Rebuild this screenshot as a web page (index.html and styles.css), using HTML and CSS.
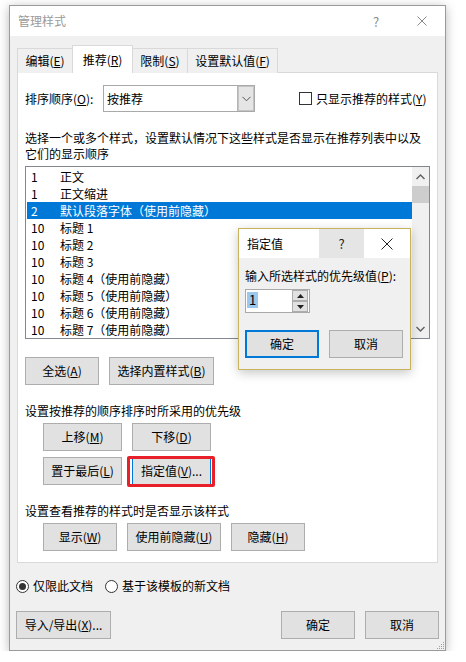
FILE: index.html
```html
<!DOCTYPE html>
<html lang="zh-CN">
<head>
<meta charset="utf-8">
<title>管理样式</title>
<link rel="stylesheet" href="styles.css">
</head>
<body>
<div class="window">
  <div class="titlebar">
    <span class="title">管理样式</span>
    <span class="tb-btn tb-help">?</span>
    <span class="tb-btn"><svg width="10" height="10" viewBox="0 0 10 10"><path d="M0.5 0.5 L9.5 9.5 M9.5 0.5 L0.5 9.5" stroke="#8a8a8a" stroke-width="1" fill="none"/></svg></span>
  </div>

  <div class="tabs">
    <div class="tab tab-1">编辑(<u>E</u>)</div>
    <div class="tab tab-active">推荐(<u>R</u>)</div>
    <div class="tab tab-3">限制(<u>S</u>)</div>
    <div class="tab tab-4">设置默认值(<u>F</u>)</div>
  </div>

  <div class="panel">
    <div class="sort-row">
      <span class="sort-label">排序顺序(<u>O</u>):</span>
      <div class="combo">
        <span class="combo-text">按推荐</span>
        <span class="combo-btn"><svg width="9" height="6" viewBox="0 0 9 6"><path d="M0.5 0.8 L4.5 4.8 L8.5 0.8" stroke="#555" stroke-width="1" fill="none"/></svg></span>
      </div>
      <span class="check"><span class="check-box"></span>只显示推荐的样式(<u>Y</u>)</span>
    </div>

    <p class="text desc">选择一个或多个样式，设置默认情况下这些样式是否显示在推荐列表中以及<br>它们的显示顺序</p>

    <div class="list">
      <div class="rows">
        <div class="row"><span class="num">1</span><span>正文</span></div>
        <div class="row"><span class="num">1</span><span>正文缩进</span></div>
        <div class="row row-sel"><span class="num">2</span><span>默认段落字体（使用前隐藏）</span></div>
        <div class="row"><span class="num">10</span><span>标题 1</span></div>
        <div class="row"><span class="num">10</span><span>标题 2</span></div>
        <div class="row"><span class="num">10</span><span>标题 3</span></div>
        <div class="row"><span class="num">10</span><span>标题 4（使用前隐藏）</span></div>
        <div class="row"><span class="num">10</span><span>标题 5（使用前隐藏）</span></div>
        <div class="row"><span class="num">10</span><span>标题 6（使用前隐藏）</span></div>
        <div class="row"><span class="num">10</span><span>标题 7（使用前隐藏）</span></div>
      </div>
      <div class="scrollbar">
        <span class="sb-btn"><svg width="9" height="6" viewBox="0 0 9 6"><path d="M0.5 5 L4.5 1 L8.5 5" stroke="#606060" stroke-width="1.4" fill="none"/></svg></span>
        <span class="sb-thumb"></span>
        <span class="sb-track"></span>
        <span class="sb-btn"><svg width="9" height="6" viewBox="0 0 9 6"><path d="M0.5 1 L4.5 5 L8.5 1" stroke="#606060" stroke-width="1.4" fill="none"/></svg></span>
      </div>
    </div>

    <div class="btn-row first-row">
      <span class="btn w74">全选(<u>A</u>)</span>
      <span class="btn w105">选择内置样式(<u>B</u>)</span>
    </div>

    <p class="text section">设置按推荐的顺序排序时所采用的优先级</p>
    <div class="btn-grid">
      <span class="btn w79">上移(<u>M</u>)</span>
      <span class="btn w79">下移(<u>D</u>)</span>
      <span class="btn w79">置于最后(<u>L</u>)</span>
      <span class="btn w79 btn-focus marked">指定值(<u>V</u>)...</span>
    </div>

    <p class="text section">设置查看推荐的样式时是否显示该样式</p>
    <div class="btn-row indent">
      <span class="btn w74">显示(<u>W</u>)</span>
      <span class="btn w94">使用前隐藏(<u>U</u>)</span>
      <span class="btn w74">隐藏(<u>H</u>)</span>
    </div>
  </div>

  <div class="radios">
    <span class="radio radio-on"></span><span class="radio-label">仅限此文档</span>
    <span class="radio"></span><span class="radio-label">基于该模板的新文档</span>
  </div>

  <div class="footer">
    <span class="btn w95">导入/导出(<u>X</u>)...</span>
    <span class="spacer"></span>
    <span class="btn w74">确定</span>
    <span class="btn w74">取消</span>
  </div>

  <div class="popup">
    <div class="popup-title">
      <span class="popup-name">指定值</span>
      <span class="popup-tb popup-help">?</span>
      <span class="popup-tb"><svg width="12" height="12" viewBox="0 0 12 12"><path d="M0.5 0.5 L11.5 11.5 M11.5 0.5 L0.5 11.5" stroke="#222" stroke-width="1" fill="none"/></svg></span>
    </div>
    <div class="popup-body">
      <p class="text popup-label">输入所选样式的优先级值(<u>P</u>):</p>
      <div class="spin">
        <span class="spin-field"><span class="spin-sel">1</span></span>
        <span class="spin-btns">
          <span class="spin-btn"><svg width="7" height="4" viewBox="0 0 7 4"><path d="M0 4 L3.5 0 L7 4 Z" fill="#222"/></svg></span>
          <span class="spin-btn"><svg width="7" height="4" viewBox="0 0 7 4"><path d="M0 0 L3.5 4 L7 0 Z" fill="#222"/></svg></span>
        </span>
      </div>
      <div class="popup-btns">
        <span class="btn w74 btn-default">确定</span>
        <span class="btn w74">取消</span>
      </div>
    </div>
  </div>

  <svg class="grip" width="9" height="9" viewBox="0 0 9 9">
    <rect x="7" y="1" width="1" height="1" fill="#a0a0a0"/>
    <rect x="5" y="3" width="1" height="1" fill="#a0a0a0"/>
    <rect x="7" y="3" width="1" height="1" fill="#a0a0a0"/>
    <rect x="3" y="5" width="1" height="1" fill="#a0a0a0"/>
    <rect x="5" y="5" width="1" height="1" fill="#a0a0a0"/>
    <rect x="7" y="5" width="1" height="1" fill="#a0a0a0"/>
    <rect x="1" y="7" width="1" height="1" fill="#a0a0a0"/>
    <rect x="3" y="7" width="1" height="1" fill="#a0a0a0"/>
    <rect x="5" y="7" width="1" height="1" fill="#a0a0a0"/>
    <rect x="7" y="7" width="1" height="1" fill="#a0a0a0"/>
  </svg>
</div>
</body>
</html>
```

FILE: styles.css
```css
* { box-sizing: border-box; }

html, body {
  margin: 0;
  padding: 0;
  background: #ffffff;
}

body {
  font-family: "Noto Sans CJK SC", "Noto Sans", sans-serif;
  font-size: 12px;
  color: #000;
}

u { text-decoration: underline; text-underline-offset: 1px; }

.window {
  position: relative;
  margin: 5px 0 0 9px;
  width: 437px;
  height: 646px;
  border: 1px solid #9b9b9b;
  background: #f0f0f0;
  box-shadow: 0 2px 10px rgba(0, 0, 0, 0.28);
  display: flex;
  flex-direction: column;
}

/* title bar */
.titlebar {
  height: 30px;
  background: #ffffff;
  display: flex;
  align-items: center;
  flex-shrink: 0;
}
.title {
  flex: 1;
  padding-left: 8px;
  color: #9a9a9a;
  line-height: 16px;
}
.tb-btn {
  width: 46px;
  height: 30px;
  display: flex;
  align-items: center;
  justify-content: center;
  color: #8a8a8a;
  font-size: 13px;
}

/* tabs */
.tabs {
  margin-top: 9px;
  margin-bottom: -1px;
  padding-left: 7px;
  height: 28px;
  display: flex;
  align-items: flex-end;
  position: relative;
  z-index: 1;
  flex-shrink: 0;
}
.tab {
  height: 25px;
  border: 1px solid #d9d9d9;
  border-bottom: none;
  background: #f0f0f0;
  line-height: 23px;
  text-align: center;
  white-space: nowrap;
}
.tab-1 { width: 56px; }
.tab-3 { width: 56px; margin-left: -1px; }
.tab-4 { width: 91px; margin-left: -1px; }
.tab-active {
  width: 61px;
  height: 28px;
  margin-left: -1px;
  background: #ffffff;
  padding-top: 2px;
  line-height: 24px;
  position: relative;
  z-index: 2;
}

/* panel */
.panel {
  margin: 0 7px;
  height: 491px;
  border: 1px solid #d9d9d9;
  background: #ffffff;
  padding: 0 7px 11px;
  flex-shrink: 0;
}

.text {
  margin: 0;
  line-height: 16px;
  white-space: nowrap;
}

.sort-row {
  margin-top: 12px;
  height: 27px;
  display: flex;
  align-items: center;
}
.sort-label { width: 78px; }
.combo {
  width: 152px;
  height: 27px;
  border: 1px solid #a9a9a9;
  display: flex;
  background: #fff;
}
.combo-text {
  flex: 1;
  padding-left: 3px;
  line-height: 25px;
}
.combo-btn {
  width: 17px;
  background: #e5e5e5;
  border: 1px solid #b4b4b4;
  border-right: none;
  border-top: none;
  border-bottom: none;
  display: flex;
  align-items: center;
  justify-content: center;
  box-shadow: inset 0 0 0 1px #c4c4c4;
}
.check {
  margin-left: 44px;
  display: flex;
  align-items: center;
  white-space: nowrap;
}
.check-box {
  width: 13px;
  height: 13px;
  border: 1px solid #333;
  background: #fff;
  margin-right: 4px;
}

.desc { margin-top: 18px; }

/* list */
.list {
  margin-top: 4px;
  width: 405px;
  height: 173px;
  border: 1px solid #828790;
  display: flex;
  background: #fff;
}
.rows {
  flex: 1;
  padding: 1px 0 0 1px;
}
.row {
  height: 17px;
  line-height: 17px;
  display: flex;
  white-space: nowrap;
}
.num {
  width: 33px;
  padding-left: 4px;
}
.row-sel {
  background: #0078d7;
  color: #fff;
}
.scrollbar {
  width: 17px;
  background: #f0f0f0;
  display: flex;
  flex-direction: column;
}
.sb-btn {
  height: 19px;
  display: flex;
  align-items: center;
  justify-content: center;
}
.sb-thumb {
  height: 17px;
  background: #cdcdcd;
}
.sb-track { flex: 1; }

/* buttons */
.btn {
  height: 28px;
  border: 1px solid #adadad;
  background: #e1e1e1;
  display: inline-flex;
  align-items: center;
  justify-content: center;
  white-space: nowrap;
  line-height: 16px;
  flex-shrink: 0;
}
.w74 { width: 74px; }
.w79 { width: 79px; }
.w94 { width: 94px; }
.w95 { width: 95px; }
.w105 { width: 105px; }

.btn-row {
  display: flex;
  gap: 10px;
}
.first-row { margin-top: 18px; }
.section { margin-top: 18px; }
.indent { margin-top: 4px; margin-left: 18px; }

.btn-grid {
  margin-top: 4px;
  margin-left: 18px;
  display: grid;
  grid-template-columns: 79px 79px;
  column-gap: 10px;
  row-gap: 6px;
}

.btn-focus { border-color: #0078d7; }
.marked { position: relative; }
.marked::after {
  content: "";
  position: absolute;
  top: -2px;
  bottom: -3px;
  left: -6px;
  right: -5px;
  border: 3px solid #e8202a;
  border-radius: 2px;
}

/* radios */
.radios {
  margin-top: 15px;
  height: 16px;
  padding-left: 6px;
  display: flex;
  align-items: center;
  flex-shrink: 0;
}
.radio {
  width: 13px;
  height: 13px;
  border: 1px solid #333;
  border-radius: 50%;
  background: #fff;
  display: flex;
  align-items: center;
  justify-content: center;
}
.radio-on::after {
  content: "";
  width: 7px;
  height: 7px;
  border-radius: 50%;
  background: #333;
}
.radio-label {
  margin-left: 4px;
  margin-right: 12px;
  line-height: 16px;
}

/* footer */
.footer {
  margin-top: 17px;
  padding: 0 6px;
  display: flex;
  gap: 10px;
  flex-shrink: 0;
}
.spacer { flex: 1; }

/* popup dialog */
.popup {
  position: absolute;
  left: 228px;
  top: 222px;
  width: 173px;
  height: 142px;
  border: 1px solid #c6b35b;
  background: #f0f0f0;
  box-shadow: 0 3px 10px rgba(0, 0, 0, 0.22);
  z-index: 5;
}
.popup-title {
  height: 29px;
  background: #fff;
  display: flex;
}
.popup-name {
  width: 80px;
  padding-left: 8px;
  line-height: 29px;
  color: #000;
}
.popup-tb {
  width: 45px;
  display: flex;
  align-items: center;
  justify-content: center;
  color: #222;
  font-size: 13px;
}
.popup-help { background: #e5e5e5; }
.popup-body { padding: 0 6px; }
.popup-label { margin-top: 10px; }
.spin {
  margin-top: 5px;
  width: 65px;
  height: 24px;
  border: 1px solid #a9a9a9;
  background: #fff;
  display: flex;
}
.spin-field {
  flex: 1;
  padding: 1px 0 0 1px;
}
.spin-sel {
  display: inline-block;
  height: 16px;
  line-height: 16px;
  padding: 0 2px;
  background: #99c9ef;
  font-size: 13px;
}
.spin-btns {
  width: 16px;
  margin: 0 1px 0 0;
  display: flex;
  flex-direction: column;
}
.spin-btn {
  height: 11px;
  border: 1px solid #adadad;
  background: #e1e1e1;
  display: flex;
  align-items: center;
  justify-content: center;
}
.popup-btns {
  margin-top: 17px;
  display: flex;
  gap: 10px;
}
.btn-default { border: 2px solid #0078d7; }

.grip {
  position: absolute;
  right: 0;
  bottom: 0;
}
```
